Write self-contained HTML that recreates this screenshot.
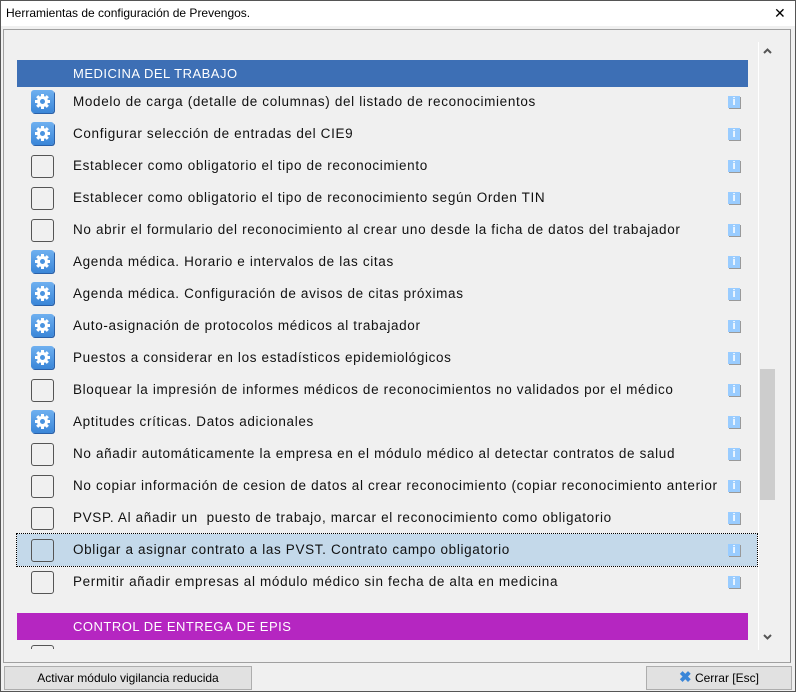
<!DOCTYPE html><html><head><style>
body{margin:0;width:796px;height:692px;background:#f0f0f0;font-family:"Liberation Sans",sans-serif;position:relative;overflow:hidden}
.title{position:absolute;left:0;top:0;width:796px;height:26px;background:#fff;font-size:12px;line-height:26px}
.tt{position:absolute;left:6px}
.x{position:absolute;left:774px;top:0;font-size:14px;font-weight:normal}
.frame{position:absolute;left:0;top:0;width:794px;height:690px;border:1px solid #555}
.panel{position:absolute;left:3px;top:29px;width:786px;height:632px;border:1px solid #a0a0a0;border-right-color:#888;overflow:hidden}
.vp{position:absolute;left:0;top:0;width:755px;height:619px;overflow:hidden}
.hdr{position:absolute;left:13px;width:731px;height:27px;color:#fff;font-size:13px;line-height:27px;letter-spacing:0.5px}
.hdr span{position:absolute;left:56px}
.row{position:absolute;left:13px;width:731px;height:32px;font-size:13.5px;line-height:32px;color:#111;white-space:nowrap;letter-spacing:0.65px}
.row .t{position:absolute;left:56px}
.cb{position:absolute;left:14px;top:5px;width:21px;height:21px;border:1px solid #555;border-radius:3px}
.gear{position:absolute;left:14px;top:4px;width:23px;height:23px;border-radius:3px;background:linear-gradient(#6fb0f0,#3a86d8);box-shadow:1px 1px 0 #2a60a8}
.info{position:absolute;left:711px;top:10px;width:12px;height:12px;background:#99ccff;box-shadow:1px 1px 0 #999;color:#fff;font-size:11px;font-weight:bold;line-height:13px;text-align:center;letter-spacing:0}
.sel{background:#c4d9ea;outline:1px dotted #000;width:740px}
.sb{position:absolute;left:754px;top:12px;width:1px;height:608px;background:#fff}
.thumb{position:absolute;left:756px;top:339px;width:15px;height:131px;background:#cdcdcd}
.btn{position:absolute;top:666px;height:22px;background:#e1e1e1;border:1px solid #adadad;font-size:12px;line-height:22px;text-align:center}
</style></head><body>
<div class="title"><span class="tt">Herramientas de configuración de Prevengos.</span><span class="x">✕</span></div>
<div class="panel">
<div class="vp">
<div class="hdr" style="top:30px;background:#3d6fb5"><span>MEDICINA DEL TRABAJO</span></div>
<div id="rows"></div>
<div class="hdr" style="top:583px;background:#b526c1"><span>CONTROL DE ENTREGA DE EPIS</span></div>
<div class="row" style="top:610px"><div class="cb"></div></div>
</div>
<div class="sb"></div>
<div class="thumb"></div>
<svg style="position:absolute;left:759px;top:18px" width="9" height="6"><path d="M1 5L4.5 1.5L8 5" stroke="#555" stroke-width="2" fill="none"/></svg>
<svg style="position:absolute;left:759px;top:604px" width="9" height="6"><path d="M1 1L4.5 4.5L8 1" stroke="#555" stroke-width="2" fill="none"/></svg>
</div>
<div class="btn" style="left:4px;width:246px">Activar módulo vigilancia reducida</div>
<div class="btn" style="left:646px;width:144px"><span style="color:#3a86d8;font-weight:bold;font-size:15px">✖</span> Cerrar [Esc]</div>
<div class="frame"></div>
<script>
var d=[[1,"Modelo de carga (detalle de columnas) del listado de reconocimientos"],[1,"Configurar selección de entradas del CIE9"],[0,"Establecer como obligatorio el tipo de reconocimiento"],[0,"Establecer como obligatorio el tipo de reconocimiento según Orden TIN"],[0,"No abrir el formulario del reconocimiento al crear uno desde la ficha de datos del trabajador"],[1,"Agenda médica. Horario e intervalos de las citas"],[1,"Agenda médica. Configuración de avisos de citas próximas"],[1,"Auto-asignación de protocolos médicos al trabajador"],[1,"Puestos a considerar en los estadísticos epidemiológicos"],[0,"Bloquear la impresión de informes médicos de reconocimientos no validados por el médico"],[1,"Aptitudes críticas. Datos adicionales"],[0,"No añadir automáticamente la empresa en el módulo médico al detectar contratos de salud"],[0,"No copiar información de cesion de datos al crear reconocimiento (copiar reconocimiento anterior)"],[0,"PVSP. Al añadir un &nbsp;puesto de trabajo, marcar el reconocimiento como obligatorio"],[0,"Obligar a asignar contrato a las PVST. Contrato campo obligatorio"],[0,"Permitir añadir empresas al módulo médico sin fecha de alta en medicina"]];
var h="";d.forEach(function(r,i){h+='<div class="row'+(i==14?' sel':'')+'" style="top:'+(56+32*i)+'px">'+(r[0]?'<div class="gear"><svg width="23" height="23" viewBox="0 0 23 23"><g fill="#fff"><circle cx="11.5" cy="11.5" r="5.5"/><rect x="10" y="4" width="3" height="15"/><rect x="4" y="10" width="15" height="3"/><rect x="10" y="4" width="3" height="15" transform="rotate(45 11.5 11.5)"/><rect x="10" y="4" width="3" height="15" transform="rotate(-45 11.5 11.5)"/></g><circle cx="11.5" cy="11.5" r="2.5" fill="#4a94e0"/></svg></div>':'<div class="cb"></div>')+'<span class="t" style="width:645px;overflow:hidden">'+r[1]+'</span><div class="info">i</div></div>'});
document.getElementById("rows").innerHTML=h;
</script>
</body></html>
